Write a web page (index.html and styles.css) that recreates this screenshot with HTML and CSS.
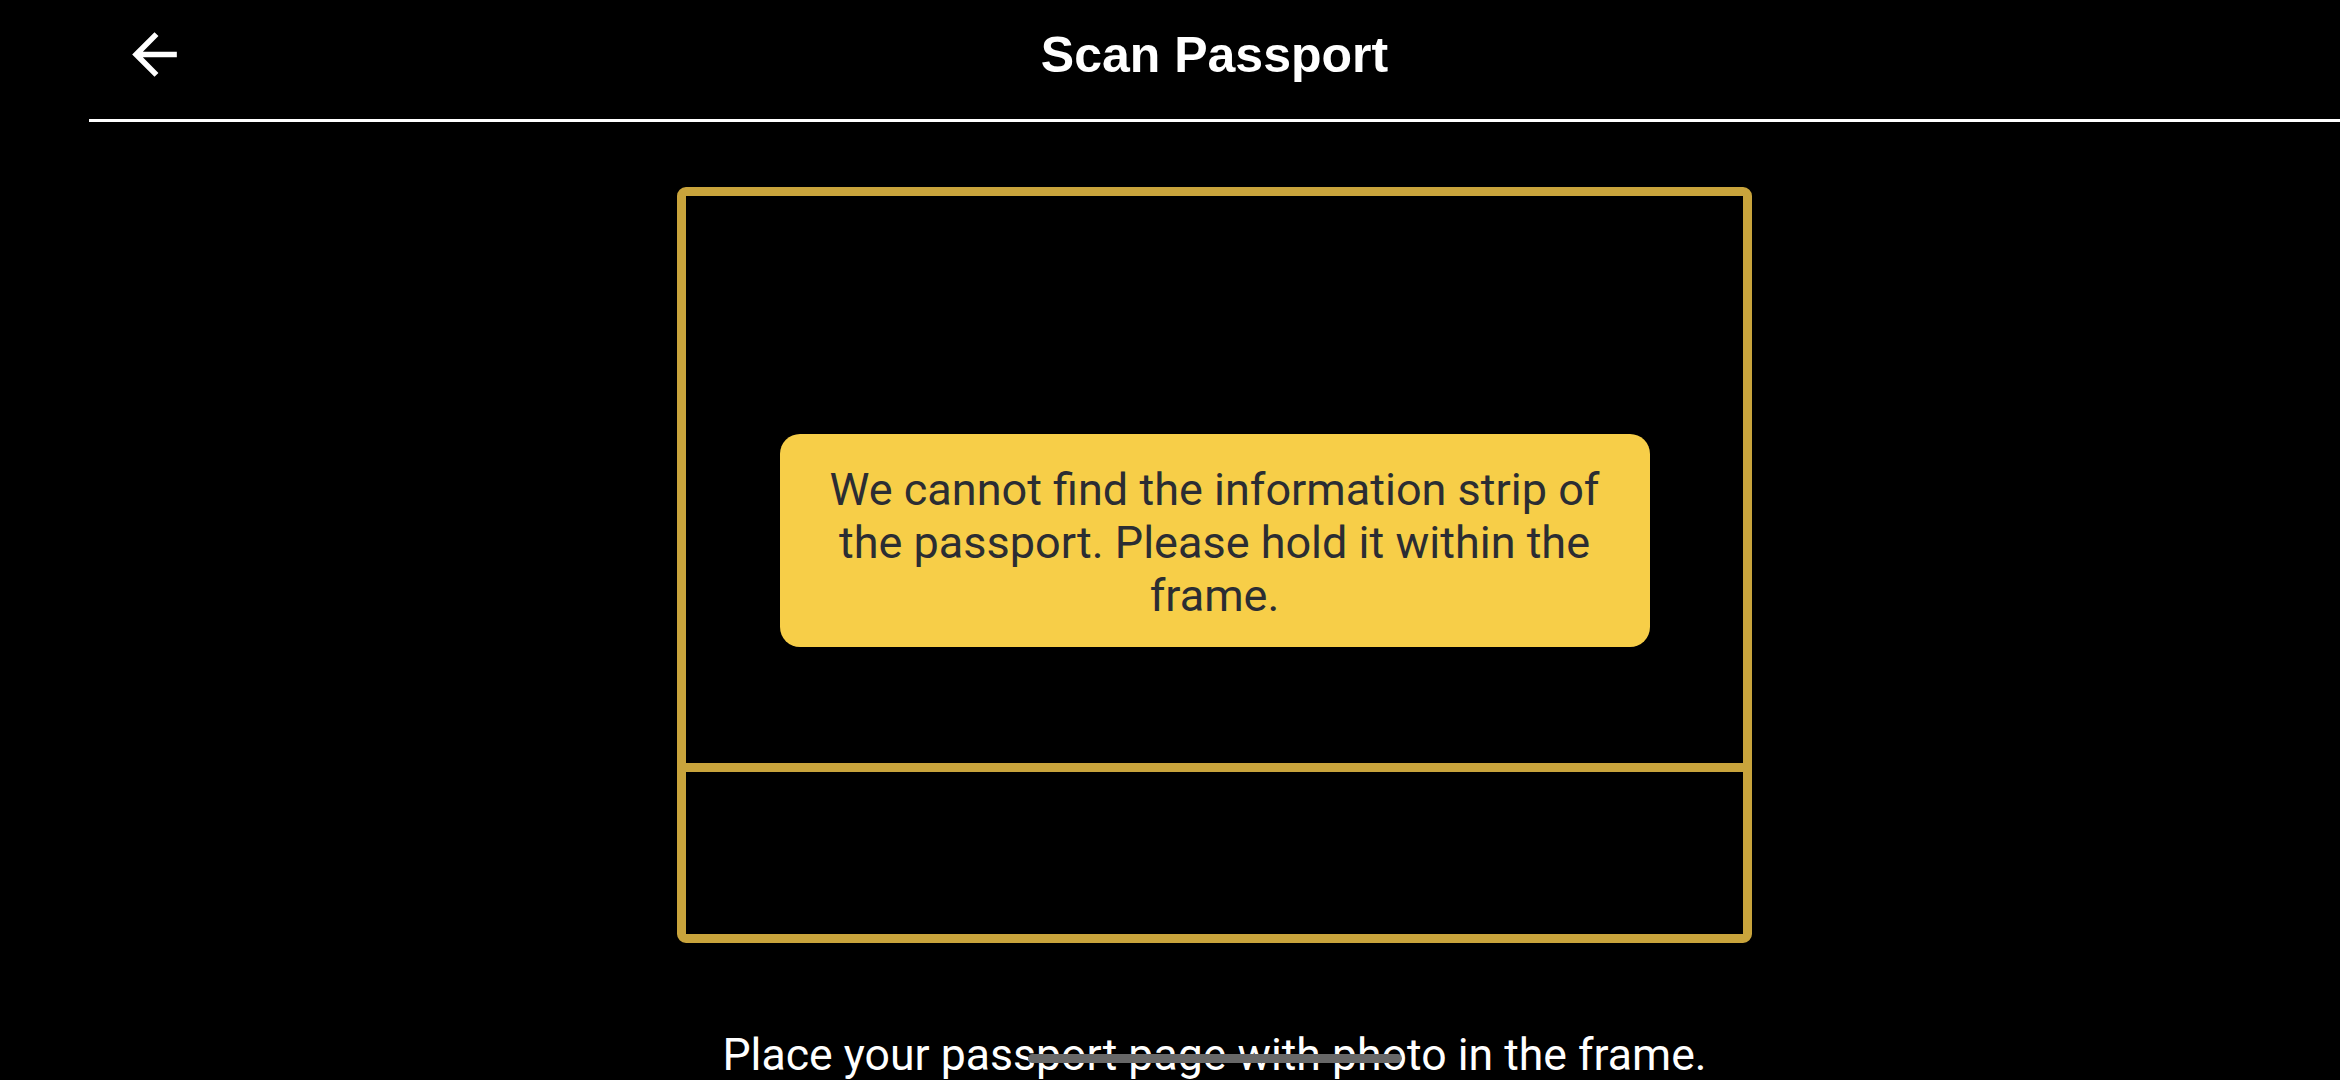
FILE: index.html
```html
<html>
  <head>
    <link rel="stylesheet" href="styles.css">
  </head>
  <body>
    <div class="screen">
      <div class="header">
        <div class="back">
          <svg class="back-icon" viewBox="0 0 24 24" width="67" height="67">
            <path d="M20 11H7.83l5.59-5.59L12 4l-8 8 8 8 1.41-1.41L7.83 13H20v-2z" fill="#ffffff"/>
          </svg>
        </div>
        <div class="title">Scan Passport</div>
        <div></div>
      </div>
      <div class="rule"></div>

      <div class="frame">
        <div class="frame-top"></div>
        <div class="frame-strip"></div>
        <div class="toast">We cannot find the information strip of the passport. Please hold it within the frame.</div>
      </div>

      <div class="hint">Place your passport page with photo in the frame.</div>
    </div>
    <div class="home-bar"></div>
  </body>
</html>
```

FILE: styles.css
```css
body {
  margin: 0;
  background-color: black;
  color: white;
  height: 1080px;
  overflow: hidden;
  position: relative;
}
.screen {
  margin-left: 89px;
  display: flex;
  flex-direction: column;
  align-items: center;
}
.header {
  width: 100%;
  height: 108px;
  display: grid;
  grid-template-columns: 1fr auto 1fr;
  align-items: center;
  margin-bottom: 11px;
}
.back {
  padding-left: 32px;
  display: flex;
  align-items: center;
}
.back-icon {
  display: block;
}
.title {
  font-family: "Liberation Sans", Arial, sans-serif;
  font-weight: bold;
  font-size: 50px;
  line-height: 58px;
  padding-top: 2px;
}
.rule {
  width: 100%;
  height: 3px;
  background-color: white;
}
.frame {
  position: relative;
  margin-top: 65px;
  width: 1057px;
  border: 9px solid #c9a43c;
  border-radius: 9px;
}
.frame-top {
  height: 567px;
}
.frame-strip {
  height: 162px;
  border-top: 9px solid #c9a43c;
}
.toast {
  position: absolute;
  top: 238px;
  left: 50%;
  transform: translateX(-50%);
  width: 790px;
  padding: 29px 40px 25px;
  background-color: #f7ce48;
  border-radius: 20px;
  color: #2b2d33;
  font-family: Roboto, "Noto Sans", sans-serif;
  font-size: 45px;
  line-height: 53px;
  text-align: center;
}
.hint {
  position: relative;
  margin-top: 86px;
  font-family: Roboto, "Noto Sans", sans-serif;
  font-size: 44.6px;
  line-height: 53px;
  color: white;
}
.home-bar {
  position: absolute;
  left: 1028px;
  top: 1054px;
  width: 374px;
  height: 9px;
  border-radius: 5px;
  background-color: #686868;
}
```
